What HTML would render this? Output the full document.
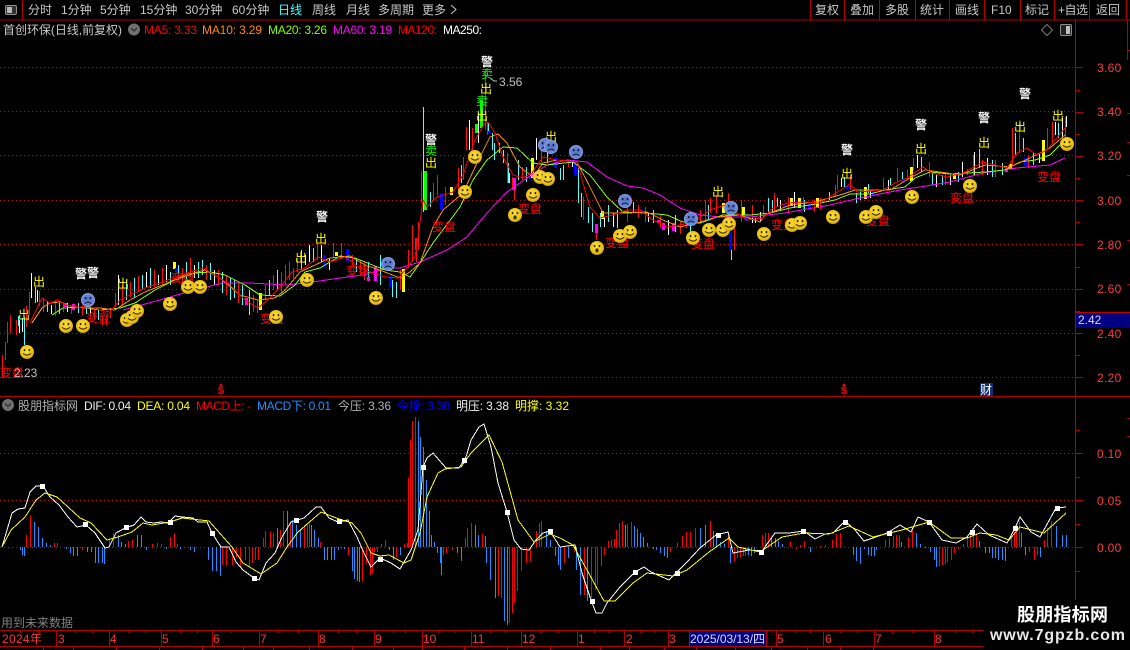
<!DOCTYPE html>
<html lang="zh"><head><meta charset="utf-8"><title>首创环保</title>
<style>
html,body{margin:0;padding:0;background:#000;width:1130px;height:650px;overflow:hidden}
svg{display:block;position:absolute;left:0;top:0}
text{font-family:"Liberation Sans","WenQuanYi Zen Hei","Noto Sans CJK SC",sans-serif;font-size:12px}
.g{fill:#c8c8c8}.ax{fill:#ff3c3c;letter-spacing:.3px}.tm{fill:#ff3232}
.j{fill:#fff;text-anchor:middle;font-weight:bold;font-size:13px}.c{fill:#ffff00;text-anchor:middle;font-size:13px}.m{fill:#00ff00;text-anchor:middle;font-size:13px}.b{fill:#ff0000;text-anchor:middle}
.bar{shape-rendering:crispEdges;fill:none;stroke-width:1}
.ln{fill:none;stroke-width:1;shape-rendering:crispEdges}
</style></head><body>
<svg width="1130" height="650" viewBox="0 0 1130 650" xmlns="http://www.w3.org/2000/svg">
<defs>
<radialGradient id="sm" cx=".45" cy=".4" r=".65"><stop offset="0" stop-color="#ffe23a"/><stop offset=".75" stop-color="#e8bd12"/><stop offset="1" stop-color="#b08a08"/></radialGradient>
<radialGradient id="sd" cx=".5" cy=".5" r=".55"><stop offset="0" stop-color="#5470c0"/><stop offset=".75" stop-color="#6a88d8"/><stop offset="1" stop-color="#a8c0f0"/></radialGradient>
<symbol id="h" overflow="visible" viewBox="-8 -8 16 16" width="16" height="16"><circle r="7" fill="url(#sm)"/><rect x="-3.2" y="-3" width="1.6" height="2.2" fill="#3a2c00"/><rect x="1.6" y="-3" width="1.6" height="2.2" fill="#3a2c00"/><path d="M-4 1.2Q0 5.2 4 1.2" fill="none" stroke="#3a2c00" stroke-width="1"/></symbol>
<symbol id="o" overflow="visible" viewBox="-8 -8 16 16" width="16" height="16"><circle r="7" fill="url(#sm)"/><rect x="-3.2" y="-3" width="1.6" height="2.2" fill="#3a2c00"/><rect x="1.6" y="-3" width="1.6" height="2.2" fill="#3a2c00"/><ellipse cy="2.4" rx="1.6" ry="2" fill="#3a2c00"/></symbol>
<symbol id="s" overflow="visible" viewBox="-8 -8 16 16" width="16" height="16"><circle r="7" fill="url(#sd)"/><rect x="-3.2" y="-3" width="1.6" height="2.2" fill="#10183c"/><rect x="1.6" y="-3" width="1.6" height="2.2" fill="#10183c"/><path d="M-3.5 3.6Q0 0.6 3.5 3.6" fill="none" stroke="#10183c" stroke-width="1"/></symbol>
</defs>

<!-- frame -->
<g class="bar" stroke="#b00000">
<path d="M0 20H1130M22.500 0V20M810.500 0V20M844.500 0V20M879.500 0V20M915.500 0V20M949.500 0V20M984.500 0V20M1020.500 0V20M1054.500 0V20M1089.500 0V20M1126.500 0V20"/>
<path d="M0 396.500H1130M1075.500 20V600M0 630.500H990M0 646.500H990M1127.500 20V60"/>
<path d="M1076 67.500H1083M1076 112.500H1083M1076 156.500H1083M1076 200.500H1083M1076 244.500H1083M1076 289.500H1083M1076 333.500H1083M1076 377.500H1083M1076 90.500H1080M1076 134.500H1080M1076 178.500H1080M1076 222.500H1080M1076 267.500H1080M1076 311.500H1080M1076 355.500H1080"/>
<path d="M1076 453.500H1083M1076 500.500H1083M1076 547.500H1083M1076 477.500H1080M1076 430.500H1080M1076 524.500H1080M1076 571.500H1080"/>
<path d="M1127 50.500H1130M1127 113.500H1130M1127 142.500H1130M1127 175.500H1130M1127 240.500H1130M1127 284.500H1130M1127 418.500H1130M1127 436.500H1130"/>
<path d="M56.500 630V646M109.500 630V646M161.500 630V646M212.500 630V646M259.500 630V646M318.500 630V646M374.500 630V646M422.500 630V646M471.500 630V646M521.500 630V646M577.500 630V646M624.500 630V646M668.500 630V646M776.500 630V646M823.500 630V646M874.500 630V646M934.500 630V646"/>
<path d="M20.500 630V633M38.500 630V633M75.500 630V633M92.500 630V633M128.500 630V633M145.500 630V633M180.500 630V633M197.500 630V633M231.500 630V633M278.500 630V633M298.500 630V633M338.500 630V633M356.500 630V633M393.500 630V633M405.500 630V633M438.500 630V633M455.500 630V633M490.500 630V633M505.500 630V633M540.500 630V633M558.500 630V633M594.500 630V633M608.500 630V633M640.500 630V633M655.500 630V633M795.500 630V633M810.500 630V633M840.500 630V633M857.500 630V633M892.500 630V633M912.500 630V633M955.500 630V633M972.500 630V633"/>
<path d="M43.500 646V650M73.500 646V650M116.500 646V650M159.500 646V650M202.500 646V650M243.500 646V650M273.500 646V650M309.500 646V650M352.500 646V650M393.500 646V650M422.500 646V650M464.500 646V650M507.500 646V650M550.500 646V650M600.500 646V650M629.500 646V650M664.500 646V650M696.500 646V650M735.500 646V650M771.500 646V650M807.500 646V650M840.500 646V650M873.500 646V650"/>
</g>
<!-- grid -->
<g fill="none" stroke="#b01010" stroke-width="1" stroke-dasharray="1 3" shape-rendering="crispEdges">
<path d="M0 67.500H1075M0 111.500H1075M0 155.500H1075M0 200.500H1075M0 244.500H1075M0 289.500H1075M0 333.500H1075M0 377.500H1075M0 453.500H1075M0 500.500H1075"/>
<path d="M0 547.500H1075"/>
</g>

<!-- toolbar -->
<rect x="5.500" y="5.500" width="11" height="9" rx="1.500" fill="#333" stroke="#909090"/><rect x="7" y="7" width="5" height="6" fill="#b8b8b8"/>
<g class="g">
<text x="28" y="14">分时</text><text x="61" y="14">1分钟</text><text x="100" y="14">5分钟</text><text x="140" y="14">15分钟</text><text x="185" y="14">30分钟</text><text x="232" y="14">60分钟</text>
<text x="278" y="14" style="fill:#40ffff">日线</text><text x="312" y="14">周线</text><text x="346" y="14">月线</text><text x="378" y="14">多周期</text><text x="422" y="14">更多</text>
<path d="M451 5l5 4.500-5 4.500" fill="none" stroke="#c8c8c8"/>
<text x="815" y="14">复权</text><text x="850" y="14">叠加</text><text x="885" y="14">多股</text><text x="920" y="14">统计</text><text x="955" y="14">画线</text><text x="991" y="14">F10</text><text x="1025" y="14">标记</text><text x="1058" y="14" textLength="30">+自选</text><text x="1096" y="14">返回</text>
<text x="3" y="34" textLength="119">首创环保(日线,前复权)</text>
</g>
<circle cx="134" cy="29.500" r="6" fill="#707070"/><path d="M131 28l3 3 3-3" fill="none" stroke="#222"/>
<text x="144" y="34" fill="#ff0000" textLength="53">MA5: 3.33</text>
<text x="202" y="34" fill="#ff8c00" textLength="60">MA10: 3.29</text>
<text x="268" y="34" fill="#80ff00" textLength="59">MA20: 3.26</text>
<text x="333" y="34" fill="#ff00ff" textLength="59">MA60: 3.19</text>
<text x="398" y="34" fill="#ff0000" textLength="39">MA120:</text>
<text x="443" y="34" fill="#fff" textLength="39">MA250:</text>
<path d="M1047 24.500l5.500 5.500-5.500 5.500-5.500-5.500z" fill="none" stroke="#777"/>
<rect x="1060.500" y="24.500" width="11" height="11" rx="1.500" fill="#222" stroke="#909090"/><rect x="1066" y="26" width="4" height="8" fill="#c0c0c0"/>

<!-- axis labels -->
<g class="ax"><text x="1097" y="72">3.60</text><text x="1097" y="116">3.40</text><text x="1097" y="160">3.20</text><text x="1097" y="205">3.00</text><text x="1097" y="249">2.80</text><text x="1097" y="293">2.60</text><text x="1097" y="338">2.40</text><text x="1097" y="382">2.20</text>
<text x="1097" y="458">0.10</text><text x="1097" y="505">0.05</text><text x="1097" y="552">0.00</text></g>
<rect x="1076" y="312" width="54" height="16" fill="#000080"/><path d="M1076 312.500H1130" stroke="#c00000"/><text x="1078" y="324" fill="#d8d8ff">2.42</text>

<!-- histogram -->
<path class="bar" stroke="#1e90ff" d="M20.500 547V550M22.500 547V555M24.500 547V556M34.500 547V522M38.500 547V527M42.500 547V538M46.500 547V543M50.500 547V545M66.500 547V549M70.500 547V553M73.500 547V556M77.500 547V556M87.500 547V552M91.500 547V552M95.500 547V563M98.500 547V563M102.500 547V563M104.500 547V564M118.500 547V535M121.500 547V542M125.500 547V544M137.500 547V535M141.500 547V535M146.500 547V550M166.500 547V549M180.500 547V549M190.500 547V550M194.500 547V552M208.500 547V560M212.500 547V571M216.500 547V571M220.500 547V576M277.500 547V528M287.500 547V511M292.500 547V520M296.500 547V525M300.500 547V530M311.500 547V525M314.500 547V530M318.500 547V538M324.500 547V560M327.500 547V560M331.500 547V560M334.500 547V560M338.500 547V550M344.500 547V549M352.500 547V571M354.500 547V579M357.500 547V581M359.500 547V582M389.500 547V550M393.500 547V560M400.500 547V555M418.500 547V421M420.500 547V437M423.500 547V447M426.500 547V480M429.500 547V511M431.500 547V535M434.500 547V542M437.500 547V553M440.500 547V563M441.500 547V575M457.500 547V553M461.500 547V561M475.500 547V525M478.500 547V535M485.500 547V536M486.500 547V563M490.500 547V580M495.500 547V598M504.500 547V621M507.500 547V625M546.500 547V531M550.500 547V540M555.500 547V556M558.500 547V565M560.500 547V570M568.500 547V558M576.500 547V570M580.500 547V595M587.500 547V601M625.500 547V525M634.500 547V526M637.500 547V529M640.500 547V533M643.500 547V537M647.500 547V543M653.500 547V549M656.500 547V550M660.500 547V553M664.500 547V556M667.500 547V558M700.500 547V528M705.500 547V525M713.500 547V531M716.500 547V538M720.500 547V542M724.500 547V544M730.500 547V563M748.500 547V555M751.500 547V556M754.500 547V553M771.500 547V538M775.500 547V538M778.500 547V541M782.500 547V544M810.500 547V552M853.500 547V555M856.500 547V561M860.500 547V564M864.500 547V549M868.500 547V555M871.500 547V556M874.500 547V556M876.500 547V550M901.500 547V542M916.500 547V533M920.500 547V544M925.500 547V548M930.500 547V552M934.500 547V560M936.500 547V567M979.500 547V541M985.500 547V553M989.500 547V553M992.500 547V558M995.500 547V558M998.500 547V560M1002.500 547V560M1005.500 547V561M1016.500 547V540M1021.500 547V533M1025.500 547V555M1040.500 547V557M1056.500 547V526M1062.500 547V535M1066.500 547V535"/>
<path class="bar" stroke="#ff0000" d="M26.500 547V535M30.500 547V516M54.500 547V543M57.500 547V543M82.500 547V550M109.500 547V540M113.500 547V533M128.500 547V541M132.500 547V540M152.500 547V544M157.500 547V543M161.500 547V544M170.500 547V537M174.500 547V533M177.500 547V544M222.500 547V565M226.500 547V565M232.500 547V565M236.500 547V557M240.500 547V568M245.500 547V560M249.500 547V566M252.500 547V563M255.500 547V560M258.500 547V560M263.500 547V538M265.500 547V531M270.500 547V532M273.500 547V533M280.500 547V530M283.500 547V511M290.500 547V522M304.500 547V525M307.500 547V524M309.500 547V524M320.500 547V542M341.500 547V549M348.500 547V555M362.500 547V581M366.500 547V563M370.500 547V575M372.500 547V573M374.500 547V552M377.500 547V552M381.500 547V544M385.500 547V540M396.500 547V557M404.500 547V544M407.500 547V543M408.500 547V478M410.500 547V440M412.500 547V421M415.500 547V417M443.500 547V555M446.500 547V553M452.500 547V550M465.500 547V538M467.500 547V528M471.500 547V523M482.500 547V534M498.500 547V596M501.500 547V598M509.500 547V623M512.500 547V613M514.500 547V603M517.500 547V591M521.500 547V571M526.500 547V563M530.500 547V561M536.500 547V531M539.500 547V523M541.500 547V521M564.500 547V563M574.500 547V552M584.500 547V595M591.500 547V598M595.500 547V590M597.500 547V585M601.500 547V566M604.500 547V555M608.500 547V541M611.500 547V540M614.500 547V539M616.500 547V530M619.500 547V523M622.500 547V521M627.500 547V524M631.500 547V522M670.500 547V552M677.500 547V543M682.500 547V536M686.500 547V532M690.500 547V532M695.500 547V528M710.500 547V521M728.500 547V533M734.500 547V561M737.500 547V558M740.500 547V557M743.500 547V556M745.500 547V556M762.500 547V535M765.500 547V533M768.500 547V533M790.500 547V542M796.500 547V549M800.500 547V545M804.500 547V541M820.500 547V546M825.500 547V545M832.500 547V540M836.500 547V534M840.500 547V533M885.500 547V540M889.500 547V538M893.500 547V536M896.500 547V535M899.500 547V535M908.500 547V537M912.500 547V529M939.500 547V566M942.500 547V565M945.500 547V564M947.500 547V562M951.500 547V560M954.500 547V553M958.500 547V549M963.500 547V544M967.500 547V538M970.500 547V530M973.500 547V528M976.500 547V533M1011.500 547V534M1014.500 547V532M1016.500 547V529M1019.500 547V521M1029.500 547V552M1034.500 547V560M1037.500 547V555M1044.500 547V540M1047.500 547V528M1051.500 547V521"/>
<polyline class="ln" stroke="#fff" points="2,547 7,530 12,513 18,509 25,508 30,492 36,486 43,486 50,497 59,505 68,517 77,527 86,525 95,533 105,548 109,547 116,533 125,528 134,525 141,517 146,522 154,523 161,522 168,523 175,516 182,517 193,518 198,522 207,522 212,533 221,547 229,547 236,562 243,570 254,578 259,580 266,563 275,553 282,537 291,522 304,518 316,507 321,507 329,518 338,522 348,520 357,537 364,553 371,567 380,558 391,563 400,569 411,550 418,530 423,467 427,458 433,453 446,468 459,468 466,457 471,440 479,427 484,424 491,447 498,483 507,512 514,540 521,549 529,550 536,540 543,533 550,531 560,547 575,545 582,573 591,600 596,613 602,613 607,603 620,587 635,572 644,567 651,572 669,580 676,573 687,562 700,548 716,535 728,532 733,553 749,550 762,551 775,533 789,533 804,531 815,539 825,534 833,533 845,521 855,530 864,541 873,538 887,533 900,525 911,532 918,517 929,522 942,540 956,543 967,537 977,524 989,535 1007,543 1015,528 1020,517 1031,532 1040,537 1056,508 1066,507"/>
<polyline class="ln" stroke="#ffff00" points="2,547 11,530 25,517 36,500 45,493 57,497 68,507 80,518 91,523 107,540 118,537 132,532 143,523 152,525 170,522 182,518 209,521 232,547 243,563 261,574 277,563 287,547 298,532 321,512 339,519 352,523 361,533 371,553 380,556 389,555 404,563 411,560 420,533 427,497 438,473 445,469 461,467 471,453 489,435 502,462 518,520 534,542 550,534 560,538 573,545 587,570 604,601 615,601 633,583 647,573 673,576 687,570 709,552 729,538 738,547 760,552 782,537 804,533 829,534 849,526 873,537 902,530 929,522 951,538 967,538 980,533 996,535 1009,540 1020,527 1044,533 1066,513"/>
<path fill="#fff" shape-rendering="crispEdges" d="M40 484h5v5h-5zM83 522h5v5h-5zM124 525h5v5h-5zM168 520h5v5h-5zM210 531h5v5h-5zM252 576h5v5h-5zM294 518h5v5h-5zM337 519h5v5h-5zM378 557h5v5h-5zM421 465h5v5h-5zM462 458h5v5h-5zM505 510h5v5h-5zM548 529h5v5h-5zM590 599h5v5h-5zM633 570h5v5h-5zM675 571h5v5h-5zM716 533h5v5h-5zM759 550h5v5h-5zM801 529h5v5h-5zM843 520h5v5h-5zM887 531h5v5h-5zM927 520h5v5h-5zM970 530h5v5h-5zM1013 526h5v5h-5zM1055 506h5v5h-5z"/>

<!-- candles -->
<path class="bar" stroke="#ff1010" d="M2.500 355V378M5.500 342V360M7.500 322V343M10.500 315V333M16.500 320V335M26.500 306V327M29.500 292V315M39.500 291V306M43.500 298V312M55.500 300V316M63.500 302V312M71.500 306V314M82.500 305V315M94.500 310V318M102.500 315V325M106.500 315V325M110.500 308V318M115.500 293V307M122.500 285V305M130.500 282V297M138.500 276V292M154.500 270V287M162.500 268V285M182.500 268V285M190.500 258V277M206.500 265V280M218.500 270V285M226.500 275V295M238.500 283V303M253.500 295V312M257.500 300V313M265.500 285V300M273.500 275V290M281.500 272V295M285.500 265V285M289.500 262V280M293.500 268V278M297.500 258V272M317.500 243V260M333.500 243V258M341.500 243V258M352.500 255V265M360.500 260V275M364.500 262V280M400.500 270V290M408.500 250V268M412.500 225V262M416.500 238V262M421.500 171V202M418.500 222V250M415.500 238V250M433.500 183V200M437.500 175V195M445.500 187V205M458.500 168V190M463.500 157V180M466.500 127V150M472.500 128V153M485.500 70V130M487.500 122V135M507.500 153V183M512.500 177V190M514.500 190V200M522.500 167V180M541.500 150V163M568.500 160V167M583.500 197V220M596.500 224V240M627.500 205V222M638.500 205V218M645.500 207V222M660.500 215V228M680.500 222V234M686.500 215V228M700.500 210V222M705.500 200V222M710.500 198V213M716.500 195V213M728.500 193V207M734.500 220V250M741.500 200V222M752.500 205V220M763.500 205V218M774.500 193V212M788.500 197V212M803.500 197V210M814.500 200V212M820.500 198V210M835.500 185V197M837.500 175V190M850.500 175V190M883.500 178V190M897.500 168V182M907.500 170V180M913.500 158V170M929.500 162V177M945.500 172V185M967.500 169V175M973.500 155V175M982.500 160V175M995.500 160V177M1012.500 128V165M1019.500 123V153M1028.500 155V168M1047.500 128V150M1052.500 122V143M1065.500 117V137"/>
<path class="bar" stroke="#50ffff" d="M18.500 316V326M24.500 317V345M22.500 318V330M35.500 287V303M47.500 302V312M59.500 303V314M78.500 303V313M86.500 303V314M98.500 310V320M126.500 280V300M134.500 278V297M142.500 275V290M150.500 268V288M170.500 272V285M178.500 265V280M186.500 262V280M198.500 262V278M202.500 260V275M210.500 263V280M222.500 272V293M230.500 278V300M234.500 280V298M242.500 285V305M249.500 290V315M269.500 280V295M277.500 270V290M301.500 250V270M313.500 248V262M356.500 258V272M368.500 262V278M380.500 255V285M392.500 280V297M396.500 282V298M423.500 107V212M430.500 192V207M461.500 165V183M488.500 123V133M492.500 133V150M494.500 143V160M499.500 143V153M503.500 150V163M508.500 163V183M518.500 160V180M526.500 167V182M547.500 147V163M560.500 168V180M563.500 165V180M578.500 167V203M581.500 193V217M588.500 207V223M592.500 213V232M600.500 213V227M608.500 205V222M617.500 210V228M633.500 202V213M653.500 210V223M675.500 215V232M690.500 212V232M708.500 205V220M731.500 250V260M768.500 198V212M772.500 200V212M777.500 198V207M804.500 200V212M829.500 192V200M844.500 177V188M856.500 193V203M860.500 190V200M868.500 184V193M890.500 178V185M902.500 172V183M921.500 157V172M932.500 173V185M942.500 175V185M958.500 172V182M979.500 149V168M992.500 160V177M1002.500 163V175M1015.500 133V155M1023.500 138V152M1033.500 152V165M1058.500 123V138"/>
<path class="bar" stroke="#ffffff" d="M19.500 320V333M22.500 323V332M31.500 273V298M37.500 290V302M51.500 305V314M67.500 303V312M90.500 306V316M118.500 275V305M146.500 272V288M158.500 275V285M166.500 265V282M194.500 265V278M214.500 270V285M305.500 255V265M309.500 245V262M321.500 245V262M329.500 258V270M469.500 120V150M478.500 113V143M509.500 173V183M536.500 138V160M572.500 160V167M604.500 217V227M613.500 213V227M648.500 213V222M668.500 220V235M752.500 218V223M755.500 218V223M760.500 212V222M780.500 200V210M794.500 192V208M841.500 178V187M870.500 190V198M888.500 180V190M917.500 155V168M936.500 175V187M950.500 175V185M962.500 162V177M974.500 152V175M987.500 158V175M1039.500 153V163M1055.500 122V135M1062.500 118V138M1066.500 116V127"/>
<path shape-rendering="crispEdges" fill="#ff00ff" d="M64 303h3v4h-3zM72 304h3v6h-3zM245 298h3v7h-3zM367 277h3v4h-3zM374 266h3v15h-3zM513 178h3v12h-3zM595 224h3v9h-3zM657 220h3v3h-3zM662 223h3v7h-3zM672 223h3v8h-3zM1005 167h3v5h-3z"/>
<path shape-rendering="crispEdges" fill="#ffff00" d="M173 262h3v7h-3zM259 293h3v17h-3zM335 252h3v4h-3zM402 269h3v23h-3zM450 187h3v8h-3zM531 158h3v20h-3zM601 211h3v8h-3zM722 203h3v10h-3zM742 207h3v8h-3zM790 198h3v8h-3zM798 198h3v10h-3zM816 198h3v10h-3zM864 187h3v12h-3zM910 167h3v14h-3zM953 174h3v5h-3zM1009 164h3v5h-3zM1042 140h3v21h-3z"/>
<path shape-rendering="crispEdges" fill="#0000ff" d="M175 268h3v4h-3zM323 255h3v12h-3zM346 249h3v12h-3zM389 275h3v12h-3zM440 193h3v17h-3zM488 131h3v3h-3zM529 175h2v4h-2zM554 158h3v10h-3zM574 162h3v14h-3zM640 210h3v3h-3zM729 213h3v37h-3zM745 213h3v8h-3zM783 204h3v4h-3zM795 200h3v8h-3zM808 202h3v8h-3zM846 186h3v3h-3zM872 191h3v5h-3zM902 179h3v3h-3zM1024 158h3v8h-3z"/>
<path shape-rendering="crispEdges" fill="#00ff00" d="M424 171h3v39h-3zM475 124h3v9h-3zM480 100h3v28h-3z"/>

<!-- moving averages -->
<polyline class="ln" stroke="#ff00ff" points="123,310 160,300 177,295 207,287 223,283 250,283 287,285 313,282 340,278 363,275 388,268 400,268 420,262 447,250 467,237 487,213 507,192 527,178 547,165 567,160 587,162 607,177 627,186 643,188 660,195 680,208 700,215 720,217 750,217 785,213 830,205 860,198 900,190 920,187 950,182 983,173 1017,168 1050,165 1065,158"/>
<polyline class="ln" stroke="#80ff00" points="52,315 63,308 80,307 100,310 120,308 135,303 155,290 175,280 195,273 210,272 225,275 245,285 260,295 280,296 295,285 305,272 320,268 340,256 355,258 370,264 385,270 400,272 410,277 420,263 433,243 460,207 473,180 487,160 503,147 517,148 533,163 547,165 573,162 590,175 607,197 623,212 647,213 667,215 683,222 700,223 723,215 750,215 770,213 790,208 810,205 835,200 850,194 870,194 885,190 905,187 915,178 930,172 950,174 985,172 1005,170 1020,162 1035,160 1050,155 1065,140"/>
<polyline class="ln" stroke="#ff8c00" points="32,323 42,308 50,303 60,302 70,306 85,308 100,308 115,310 130,300 145,292 165,284 185,275 205,270 220,278 240,295 258,300 275,298 285,290 300,272 315,265 330,258 350,256 365,265 385,272 400,278 410,272 420,263 433,227 443,210 463,193 477,163 490,137 498,134 507,143 520,167 533,177 543,163 557,160 577,162 590,187 603,213 627,213 647,212 663,220 680,227 697,223 717,217 740,215 760,222 765,215 790,205 815,202 840,195 855,190 870,190 890,190 910,178 925,170 940,172 960,175 985,165 1010,167 1030,158 1050,148 1065,135"/>
<polyline class="ln" stroke="#ff0000" points="30,323 42,298 50,303 58,300 66,305 80,307 90,307 100,310 110,312 120,300 130,295 145,288 160,283 175,277 190,272 203,268 215,275 230,285 245,300 258,308 270,298 280,287 292,272 305,268 318,257 330,262 345,257 360,268 370,272 385,277 398,278 408,267 415,257 418,237 423,200 427,207 437,197 453,192 463,175 475,140 485,123 489,123 495,133 503,157 513,175 523,178 532,173 543,157 557,160 577,162 583,183 590,207 600,218 613,215 627,210 640,210 653,220 667,227 680,225 693,222 710,210 725,205 747,220 763,218 773,208 787,203 803,202 820,203 833,195 850,184 857,192 883,190 897,182 907,178 923,167 932,173 947,177 963,173 983,162 1007,168 1017,153 1027,148 1037,155 1047,150 1065,128"/>

<!-- markers -->
<g class="b">
<text x="12" y="377">变盘</text><text x="98" y="322">变盘</text><text x="183" y="282">变盘</text><text x="358" y="275">变盘</text><text x="272" y="323">变盘</text>
<text x="444" y="231">变盘</text><text x="530" y="213">变盘</text><text x="617" y="247">变盘</text><text x="703" y="248">变盘</text><text x="783" y="229">变盘</text><text x="878" y="225">变盘</text><text x="962" y="202">变盘</text><text x="1049" y="181">变盘</text>
</g>
<text x="14" y="377" fill="#c0c0c0">2.23</text>
<text x="499" y="86" fill="#c0c0c0">3.56</text>
<path d="M490 78l4 3h3" stroke="#c0c0c0" fill="none"/>
<g class="c">
<text x="24" y="319">出</text><text x="39" y="286">出</text><text x="123" y="288">出</text><text x="301" y="262">出</text><text x="321" y="243">出</text>
<text x="431" y="167">出</text><text x="486" y="93">出</text><text x="482" y="120">出</text><text x="551" y="141">出</text><text x="718" y="196">出</text>
<text x="847" y="178">出</text><text x="921" y="153">出</text><text x="984" y="147">出</text><text x="1020" y="131">出</text><text x="1058" y="120">出</text>
</g>
<g class="m"><text x="487" y="78">卖</text><text x="482" y="105">卖</text><text x="431" y="155">卖</text></g>
<g class="j">
<text x="81" y="278">警</text><text x="93" y="277">警</text><text x="322" y="221">警</text><text x="431" y="144">警</text><text x="487" y="66">警</text><text x="847" y="154">警</text><text x="921" y="129">警</text><text x="984" y="122">警</text><text x="1025" y="98">警</text>
</g>
<!-- faces -->
<use href="#h" x="19" y="344"/><use href="#h" x="58" y="318"/><use href="#h" x="75" y="318"/><use href="#h" x="119" y="312"/><use href="#h" x="124" y="309"/><use href="#h" x="129" y="303"/><use href="#h" x="162" y="296"/><use href="#h" x="180" y="279"/><use href="#h" x="192" y="279"/><use href="#h" x="268" y="309"/><use href="#h" x="299" y="272"/><use href="#h" x="368" y="290"/>
<use href="#h" x="467" y="149"/><use href="#h" x="457" y="184"/><use href="#h" x="532" y="169"/><use href="#h" x="540" y="171"/><use href="#h" x="525" y="187"/><use href="#o" x="507" y="207"/><use href="#o" x="589" y="240"/><use href="#h" x="612" y="228"/><use href="#h" x="622" y="224"/><use href="#h" x="685" y="230"/><use href="#h" x="701" y="222"/><use href="#h" x="715" y="222"/><use href="#h" x="721" y="216"/>
<use href="#h" x="756" y="226"/><use href="#h" x="784" y="217"/><use href="#h" x="792" y="215"/><use href="#h" x="825" y="209"/><use href="#h" x="858" y="209"/><use href="#h" x="868" y="204"/><use href="#h" x="904" y="189"/><use href="#h" x="962" y="178"/><use href="#h" x="1059" y="136"/>
<use href="#s" x="80" y="292"/><use href="#s" x="380" y="256"/><use href="#s" x="537" y="137"/><use href="#s" x="543" y="139"/><use href="#s" x="568" y="144"/><use href="#s" x="617" y="193"/><use href="#s" x="683" y="211"/><use href="#s" x="723" y="200"/>

<!-- events -->
<text x="221" y="394" fill="#ff0000" text-anchor="middle" font-weight="bold" style="font-size:11px">$</text>
<text x="844" y="394" fill="#ff0000" text-anchor="middle" font-weight="bold" style="font-size:11px">$</text>
<path d="M221 383l-2 3h4zM844 383l-2 3h4z" fill="#ff0000"/>
<rect x="980" y="383" width="13" height="13" fill="#103070"/><text x="980" y="394" fill="#fff">财</text>

<!-- sub legend -->
<circle cx="8" cy="405" r="6" fill="#707070"/><path d="M5 403.500l3 3 3-3" fill="none" stroke="#222"/>
<text x="18" y="410" fill="#b0b0b0">股朋指标网</text>
<text x="84" y="410" fill="#f0f0f0" textLength="47">DIF: 0.04</text>
<text x="137" y="410" fill="#ffff00" textLength="53">DEA: 0.04</text>
<text x="196" y="410" fill="#ff0000" textLength="55">MACD上: -</text>
<text x="257" y="410" fill="#1e90ff" textLength="74">MACD下: 0.01</text>
<text x="338" y="410" fill="#b0b0b0" textLength="53">今压: 3.36</text>
<text x="397" y="410" fill="#0000ff" textLength="53">今撑: 3.30</text>
<text x="456" y="410" fill="#f0f0f0" textLength="53">明压: 3.38</text>
<text x="515" y="410" fill="#ffff00" textLength="54">明撑: 3.32</text>
<text x="1" y="627" fill="#808080">用到未来数据</text>

<!-- time axis -->
<g class="tm"><text x="2" y="643" letter-spacing=".3">2024年</text><text x="58" y="643">3</text><text x="110" y="643">4</text><text x="162" y="643">5</text><text x="213" y="643">6</text><text x="260" y="643">7</text><text x="319" y="643">8</text><text x="375" y="643">9</text><text x="423" y="643">10</text><text x="472" y="643">11</text><text x="522" y="643">12</text><text x="578" y="643">1</text><text x="626" y="643">2</text><text x="669" y="643">3</text><text x="777" y="643">5</text><text x="825" y="643">6</text><text x="875" y="643">7</text><text x="935" y="643">8</text></g>
<rect x="689" y="631" width="77" height="15" fill="#000080"/><path d="M689.500 630V646M766.500 630V646" stroke="#c00000" shape-rendering="crispEdges"/>
<text x="690" y="643" fill="#d8d8ff" textLength="75">2025/03/13/四</text>

<!-- watermark -->
<rect x="984" y="600" width="146" height="50" fill="#000"/>
<text x="1017" y="621" fill="#fff" font-weight="bold" textLength="91" style="font-size:18px">股朋指标网</text>
<text x="990" y="640" fill="#e8e8e8" font-weight="bold" textLength="135" style="font-size:16px">www.7gpzb.com</text>
</svg>
</body></html>
